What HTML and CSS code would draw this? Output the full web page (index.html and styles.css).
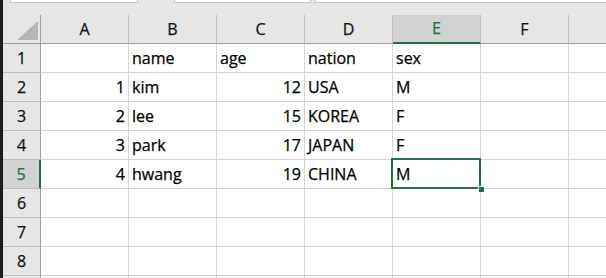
FILE: index.html
```html
<!DOCTYPE html>
<html>
<head>
<meta charset="utf-8">
<link rel="stylesheet" href="styles.css">
</head>
<body>
<div class="app">
  <div class="edge"></div>
  <div class="main">
    <div class="formula">
      <div class="box namebox"></div>
      <div class="box midbox"></div>
      <div class="box fbox"></div>
    </div>
    <div class="sheet">
      <div class="hd corner"><svg width="21" height="19" viewBox="0 0 21 19"><polygon points="0,19 21,19 21,0" fill="#b5b5b5"/></svg></div>
      <div class="hd col">A</div><div class="hd col">B</div><div class="hd col">C</div><div class="hd col">D</div><div class="hd col sel">E</div><div class="hd col">F</div><div class="hd col"></div>

      <div class="hd row">1</div><div class="c"></div><div class="c">name</div><div class="c">age</div><div class="c">nation</div><div class="c">sex</div><div class="c"></div><div class="c"></div>
      <div class="hd row">2</div><div class="c num">1</div><div class="c">kim</div><div class="c num">12</div><div class="c">USA</div><div class="c">M</div><div class="c"></div><div class="c"></div>
      <div class="hd row">3</div><div class="c num">2</div><div class="c">lee</div><div class="c num">15</div><div class="c">KOREA</div><div class="c">F</div><div class="c"></div><div class="c"></div>
      <div class="hd row">4</div><div class="c num">3</div><div class="c">park</div><div class="c num">17</div><div class="c">JAPAN</div><div class="c">F</div><div class="c"></div><div class="c"></div>
      <div class="hd row sel">5</div><div class="c num">4</div><div class="c">hwang</div><div class="c num">19</div><div class="c">CHINA</div><div class="c active">M</div><div class="c"></div><div class="c"></div>
      <div class="hd row">6</div><div class="c"></div><div class="c"></div><div class="c"></div><div class="c"></div><div class="c"></div><div class="c"></div><div class="c"></div>
      <div class="hd row">7</div><div class="c"></div><div class="c"></div><div class="c"></div><div class="c"></div><div class="c"></div><div class="c"></div><div class="c"></div>
      <div class="hd row">8</div><div class="c"></div><div class="c"></div><div class="c"></div><div class="c"></div><div class="c"></div><div class="c"></div><div class="c"></div>
      <div class="hd row"></div><div class="c"></div><div class="c"></div><div class="c"></div><div class="c"></div><div class="c"></div><div class="c"></div><div class="c"></div>
    </div>
  </div>
</div>
</body>
</html>
```
FILE: styles.css
```css
html, body {
  margin: 0;
  padding: 0;
  background: #ffffff;
  overflow: hidden;
}
body {
  width: 606px;
  height: 278px;
  font-family: "Open Sans", "Noto Sans CJK KR", sans-serif;
  font-size: 16px;
  color: #000;
  -webkit-text-stroke: 0.25px currentColor;
}
.app {
  display: flex;
  height: 278px;
  overflow: hidden;
}
.edge {
  width: 3px;
  flex: none;
  background: #1c1c1c;
}
.main {
  flex: 1;
  min-width: 0;
  display: flex;
  flex-direction: column;
  overflow: hidden;
}
.formula {
  height: 15px;
  flex: none;
  background: #e6e6e6;
  display: flex;
  align-items: flex-start;
}
.box {
  height: 2px;
  background: #ffffff;
  border: 1px solid #c6c6c6;
  border-top: none;
}
.namebox {
  margin-left: 7px;
  width: 126px;
}
.midbox {
  margin-left: 36px;
  width: 135px;
}
.fbox {
  margin-left: 4px;
  flex: 1;
  border-right: none;
}
.sheet {
  display: grid;
  grid-template-columns: 38px repeat(7, 88px);
  grid-auto-rows: 29px;
  width: max-content;
}
.sheet > div {
  box-sizing: border-box;
  border-right: 1px solid #d4d4d4;
  border-bottom: 1px solid #d4d4d4;
  display: flex;
  align-items: flex-end;
  padding: 0 3px 4px 3px;
  line-height: 20px;
  white-space: nowrap;
  overflow: visible;
}
.sheet > .hd {
  background: #e6e6e6;
  color: #111;
  justify-content: center;
}
.sheet > .col {
  border-right: 1px solid #bfbfbf;
  border-bottom: 1px solid #9e9e9e;
}
.sheet > .row {
  border-right: 1px solid #9e9e9e;
  border-bottom: 1px solid #bdbdbd;
  padding-left: 0;
  padding-right: 0;
}
.sheet > .corner {
  justify-content: flex-end;
  padding: 0 2px 3px 0;
  border-right: 1px solid #9e9e9e;
  border-bottom: 1px solid #9e9e9e;
}
.corner svg {
  display: block;
}
.sheet > .col.sel {
  background: #d2d2d2;
  color: #217346;
  border-bottom: 2px solid #217346;
}
.sheet > .row.sel {
  background: #d2d2d2;
  color: #217346;
  border-right: 2px solid #217346;
}
.sheet > .num {
  justify-content: flex-end;
}
.sheet > .active {
  position: relative;
}
.active::after {
  content: "";
  position: absolute;
  top: -2px;
  left: -2px;
  right: -1px;
  bottom: -1px;
  border: 2px solid #217346;
  pointer-events: none;
}
.active::before {
  content: "";
  position: absolute;
  right: -4px;
  bottom: -4px;
  width: 5px;
  height: 5px;
  background: #217346;
  border: 1px solid #ffffff;
  border-right: none;
  border-bottom: none;
  z-index: 2;
}
```
